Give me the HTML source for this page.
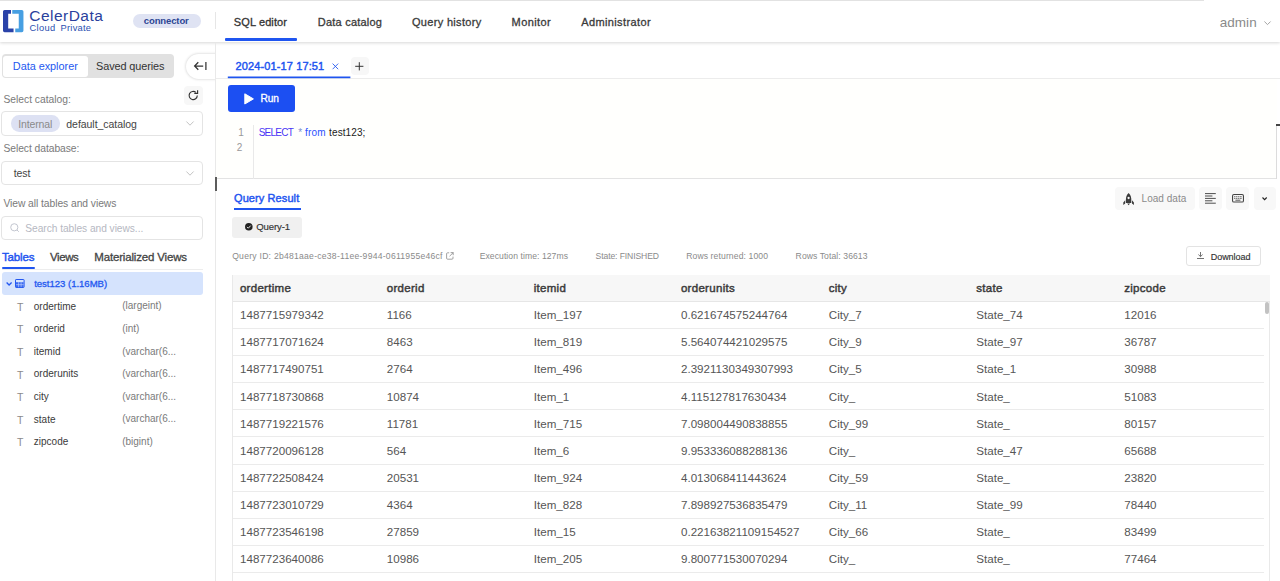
<!DOCTYPE html>
<html lang="en">
<head>
<meta charset="utf-8">
<title>CelerData Cloud Private - SQL editor</title>
<style>
*{box-sizing:border-box;margin:0;padding:0}
html,body{width:1280px;height:581px;overflow:hidden;background:#fff}
body{font-family:"Liberation Sans",sans-serif;position:relative;color:#333}
.t{position:absolute;white-space:nowrap;line-height:16px;height:16px}
.abs{position:absolute}
#topline{left:0;top:0;width:1204px;height:1px;background:#e2e2e2}
#header{left:0;top:0;width:1280px;height:42px;background:#fff;box-shadow:0 1px 3px rgba(0,0,0,.16)}
#hdiv{left:215px;top:12px;width:1px;height:17px;background:#e6e6e6}
#pill{left:133px;top:14px;width:67.5px;height:14px;border-radius:7px;background:#dfe3f3}
#navline{left:225px;top:38px;width:72px;height:3px;background:#1f55f0;border-radius:1px}
#sideborder,#sideborder2{left:215px;top:43px;width:1px;height:538px;background:#e9e9e9}
#seg{left:2px;top:54px;width:172px;height:24px;border-radius:4px;background:#e1e1e1}
#segsel{left:3px;top:55.5px;width:85px;height:21.5px;border-radius:3px;background:#fff}
#collapse{left:186px;top:53.5px;width:34px;height:25.5px;border-radius:13px 0 0 13px;background:#fff;box-shadow:0 0 3px rgba(0,0,0,.22)}
#colmask{left:216px;top:48px;width:10px;height:36px;background:#fff}
#refresh{left:184px;top:86px;width:18.5px;height:19px;border-radius:4px;background:#f7f7f7}
.sel{left:1px;width:202px;height:24.5px;border:1px solid #e4e4e4;border-radius:4px;background:#fff}
#intpill{left:11px;top:115.3px;width:49.3px;height:16.4px;border-radius:8.2px;background:#dde1f3}
#tabline{left:2px;top:269px;width:201px;height:1px;background:#ededed}
#tabink{left:1.8px;top:267px;width:33px;height:2.3px;background:#1f55f0;border-radius:1px}
#treerow{left:1.5px;top:272px;width:201px;height:23px;border-radius:3px;background:#d5e3fd}
#etabline{left:216px;top:78px;width:1064px;height:1px;background:#ececec}
#etabink{left:227.8px;top:76.5px;width:122.6px;height:1.8px;background:#1f55f0}
#plus{left:350.5px;top:57px;width:18px;height:18px;border-radius:4px;background:#f7f7f7}
#run{left:227.8px;top:85px;width:67px;height:26.8px;border-radius:3px;background:#1c4ff2}
#editor{left:216px;top:79px;width:1061px;height:100px;background:#fffffd;border-bottom:1px solid #e3e3e3}
#eright{left:1276px;top:124px;width:1px;height:55px;background:#dcdcdc}
#gutter{left:253px;top:124.6px;width:1px;height:54px;background:#e9e9e9}
#handle{left:215px;top:177px;width:2px;height:13.5px;background:#5c5c5c}
#handle2{left:1276px;top:124px;width:4px;height:2px;background:#444}
#qrink{left:233.8px;top:208px;width:67.2px;height:2.2px;background:#1f55f0}
#chip{left:232px;top:217px;width:70px;height:20.5px;border-radius:3px;background:#f0f0f0}
.tb{top:187px;height:23px;border-radius:4px;background:#f8f8f8}
#dl{left:1186.2px;top:246.3px;width:74.6px;height:19.4px;border:1px solid #e3e3e3;border-radius:3px;background:#fff}
#table{left:232px;top:274.6px;width:1038px;height:310px;border:1px solid #e9e9e9;background:#fff}
#thead{left:233px;top:275px;width:1036.5px;height:27px;background:#f7f7f7;border-bottom:1px solid #e6e6e6}
.rl{left:233px;width:1031px;height:1px;background:#ebebeb}
#sbthumb{left:1265px;top:302px;width:4.2px;height:11.5px;border-radius:2px;background:#c2c2c2}
svg{position:absolute;overflow:visible}
</style>
</head>
<body>
<div class="abs" id="header"></div>
<div class="abs" id="topline"></div>
<div class="abs" id="hdiv"></div>
<div class="abs" id="pill"></div>
<div class="abs" id="navline"></div>
<div class="abs" id="sideborder"></div>

<!-- logo -->
<svg style="left:2.75px;top:9.85px" width="21" height="23" viewBox="0 0 21 23">
  <path d="M1.6 0 H8 V3.7 H5.2 V18.4 H10.55 V22.15 H1.6 Q0 22.15 0 20.55 V1.6 Q0 0 1.6 0 Z" fill="#2a42a8"/>
  <path d="M9.25 0 H18.85 Q20.45 0 20.45 1.6 V20.55 Q20.45 22.15 18.85 22.15 H12.25 V18.6 H15.75 V3.7 H9.25 Z" fill="#479fe2"/>
</svg>

<!-- sidebar -->
<div class="abs" id="seg"></div>
<div class="abs" id="segsel"></div>
<div class="abs" id="collapse"></div>
<div class="abs" id="colmask"></div>
<div class="abs" id="sideborder2"></div>
<svg style="left:193.9px;top:60.6px" width="13" height="10" viewBox="0 0 13 10"><path d="M0.6 5 H9.2 M4.3 1.2 L0.6 5 L4.3 8.8 M11.9 1 V9" fill="none" stroke="#333" stroke-width="1.25"/></svg>
<div class="abs" id="refresh"></div>
<svg style="left:188px;top:90.2px" width="11" height="11" viewBox="0 0 11 11"><path d="M9.3 5.6 A4.1 4.1 0 1 1 7.9 2.4" fill="none" stroke="#333" stroke-width="1.15"/><path d="M6.3 3.4 H9.6 V0.2" fill="none" stroke="#333" stroke-width="1.15"/></svg>
<div class="abs sel" style="top:111px"></div>
<div class="abs" id="intpill"></div>
<svg style="left:186px;top:121px" width="8" height="5" viewBox="0 0 8 5"><path d="M0.4 0.5 L4 4.2 L7.6 0.5" fill="none" stroke="#c4c4c4" stroke-width="1"/></svg>
<div class="abs sel" style="top:161.3px;height:23.4px"></div>
<svg style="left:186px;top:170.8px" width="8" height="5" viewBox="0 0 8 5"><path d="M0.4 0.5 L4 4.2 L7.6 0.5" fill="none" stroke="#c4c4c4" stroke-width="1"/></svg>
<div class="abs sel" style="top:216px;height:24px"></div>
<svg style="left:10.3px;top:222.5px" width="10" height="10" viewBox="0 0 10 10"><circle cx="4.3" cy="4.3" r="3.6" fill="none" stroke="#c3c6d0" stroke-width="1"/><path d="M7 7 L8.8 8.8" stroke="#c3c6d0" stroke-width="1"/></svg>
<div class="abs" id="tabline"></div>
<div class="abs" id="tabink"></div>
<div class="abs" id="treerow"></div>
<svg style="left:5.8px;top:282px" width="7" height="4" viewBox="0 0 7 4"><path d="M0.6 0.5 L3.1 3 L5.6 0.5" fill="none" stroke="#2458f0" stroke-width="1.3"/></svg>
<svg style="left:14.9px;top:279.2px" width="10" height="9" viewBox="0 0 10 9"><rect x="0.5" y="0.5" width="8.6" height="8" rx="0.6" fill="none" stroke="#2458f0" stroke-width="1"/><rect x="1" y="3.2" width="7.6" height="5" fill="#3a69f2"/><path d="M1 5.7 H8.6 M3.6 3.2 V8.2 M6.1 3.2 V8.2" stroke="#cfdcfc" stroke-width="0.6" fill="none"/></svg>

<!-- main -->
<div class="abs" id="editor"></div>
<div class="abs" id="eright"></div>
<div class="abs" id="etabline"></div>
<svg style="left:0;top:0" width="1280" height="581"><rect x="227.8" y="76.5" width="122.6" height="1.7" fill="#1f55f0"/></svg>
<svg style="left:331.5px;top:63.4px" width="7" height="7" viewBox="0 0 7 7"><path d="M0.6 0.6 L6.2 6.2 M6.2 0.6 L0.6 6.2" stroke="#2458f0" stroke-width="0.9" fill="none"/></svg>
<div class="abs" id="plus"></div>
<svg style="left:355.2px;top:61.8px" width="9" height="9" viewBox="0 0 9 9"><path d="M4.3 0.2 V8.4 M0.2 4.3 H8.4" stroke="#333" stroke-width="1" fill="none"/></svg>
<div class="abs" id="run"></div>
<svg style="left:243.7px;top:92.6px" width="10" height="12" viewBox="0 0 10 12"><path d="M0.8 0.8 L9.4 5.9 L0.8 11 Z" fill="#fff" stroke="#fff" stroke-width="1" stroke-linejoin="round"/></svg>
<div class="abs" id="gutter"></div>
<div class="abs" id="handle"></div>
<div class="abs" id="handle2"></div>
<div class="abs" id="qrink"></div>
<div class="abs" id="chip"></div>
<svg style="left:245px;top:223.4px" width="8" height="8" viewBox="0 0 8 8"><circle cx="3.8" cy="3.8" r="3.8" fill="#222"/><path d="M2 3.9 L3.3 5.2 L5.7 2.6" fill="none" stroke="#fff" stroke-width="0.9"/></svg>
<svg style="left:445.8px;top:251.8px" width="8" height="8" viewBox="0 0 8 8"><path d="M3.2 0.8 H1.6 Q0.6 0.8 0.6 1.8 V6.2 Q0.6 7.2 1.6 7.2 H6 Q7 7.2 7 6.2 V4.6 M4.6 0.6 H7.2 V3.2 M7.2 0.6 L3.6 4.2" fill="none" stroke="#8a8a8a" stroke-width="0.8"/></svg>

<!-- toolbar -->
<div class="abs tb" style="left:1114.8px;width:79.8px"></div>
<div class="abs tb" style="left:1199.4px;width:22.4px"></div>
<div class="abs tb" style="left:1226.4px;width:22.5px"></div>
<div class="abs tb" style="left:1253.7px;width:22.4px"></div>
<svg style="left:1123px;top:192.8px" width="12" height="13" viewBox="0 0 12 13"><path d="M5.6 0 C7.6 1.7 8.3 4.2 8.3 6.8 V10 H2.9 V6.8 C2.9 4.2 3.6 1.7 5.6 0 Z" fill="#3a3a3a"/><circle cx="5.6" cy="5" r="1.15" fill="#f8f8f8"/><path d="M2.2 7.2 L0.3 9.4 V12 L2.2 10.6 Z M9 7.2 L10.9 9.4 V12 L9 10.6 Z" fill="#3a3a3a"/><path d="M4.2 10.6 H7 L5.6 12.2 Z" fill="#3a3a3a"/></svg>
<svg style="left:1205px;top:193px" width="11" height="11" viewBox="0 0 11 11"><path d="M0 0.6 H10.8 M0 3 H7.4 M0 5.4 H10.8 M0 7.8 H7.4 M0 10.2 H10.8" stroke="#444" stroke-width="0.95" fill="none"/></svg>
<svg style="left:1232px;top:194.2px" width="12" height="9" viewBox="0 0 12 9"><rect x="0.55" y="0.55" width="10.9" height="7.5" rx="1.4" fill="none" stroke="#444" stroke-width="1.1"/><path d="M2.2 2.7 H3.4 M4.2 2.7 H5.4 M6.2 2.7 H7.4 M8.2 2.7 H9.6 M2.2 4.4 H3.4 M4.2 4.4 H5.4 M6.2 4.4 H7.4 M8.2 4.4 H9.6 M3.4 6.2 H8.4" stroke="#444" stroke-width="0.9" fill="none"/></svg>
<svg style="left:1262.4px;top:197px" width="6" height="4" viewBox="0 0 6 4"><path d="M0.5 0.5 L2.6 2.7 L4.7 0.5" fill="none" stroke="#222" stroke-width="1.1"/></svg>

<div class="abs" id="dl"></div>
<svg style="left:1197.1px;top:252.2px" width="7" height="7" viewBox="0 0 7 7"><path d="M3.5 0 V4.4 M1.4 2.6 L3.5 4.6 L5.6 2.6 M0 6.5 H7" fill="none" stroke="#444" stroke-width="0.75"/></svg>

<!-- table -->
<div class="abs" id="table"></div>
<div class="abs" id="thead"></div>
<div class="abs rl" style="top:327.8px"></div>
<div class="abs rl" style="top:355.0px"></div>
<div class="abs rl" style="top:382.1px"></div>
<div class="abs rl" style="top:409.2px"></div>
<div class="abs rl" style="top:436.4px"></div>
<div class="abs rl" style="top:463.5px"></div>
<div class="abs rl" style="top:490.6px"></div>
<div class="abs rl" style="top:517.7px"></div>
<div class="abs rl" style="top:544.9px"></div>
<div class="abs rl" style="top:572.0px"></div>
<div class="abs" id="sbthumb"></div>
<svg style="left:1263.8px;top:20.8px" width="8" height="5" viewBox="0 0 8 5"><path d="M0.4 0.5 L3.5 3.6 L6.6 0.5" fill="none" stroke="#9a9a9a" stroke-width="0.9"/></svg>

<span class="t" id="t0" style="left:29.3px;top:8.2px;font-size:15.5px;color:#2a3f9d;letter-spacing:0.465px;">CelerData</span>
<span class="t" id="t1" style="left:29.6px;top:19.6px;font-size:9.3px;color:#2a4fb0;letter-spacing:0.301px;">Cloud</span>
<span class="t" id="t2" style="left:60.5px;top:19.6px;font-size:9.3px;color:#2a4fb0;letter-spacing:0.260px;">Private</span>
<span class="t" id="t3" style="left:143.8px;top:12.6px;font-size:9.5px;color:#2c4593;font-weight:700;letter-spacing:-0.117px;">connector</span>
<span class="t" id="t4" style="left:233.8px;top:13.9px;font-size:11px;color:#333;-webkit-text-stroke:0.3px #333;letter-spacing:0.113px;">SQL editor</span>
<span class="t" id="t5" style="left:317.8px;top:13.9px;font-size:11px;color:#3a3a3a;-webkit-text-stroke:0.3px #3a3a3a;letter-spacing:0.221px;">Data catalog</span>
<span class="t" id="t6" style="left:411.9px;top:13.9px;font-size:11px;color:#3a3a3a;-webkit-text-stroke:0.3px #3a3a3a;letter-spacing:0.332px;">Query history</span>
<span class="t" id="t7" style="left:511.6px;top:13.9px;font-size:11px;color:#3a3a3a;-webkit-text-stroke:0.3px #3a3a3a;letter-spacing:0.385px;">Monitor</span>
<span class="t" id="t8" style="left:581.2px;top:13.9px;font-size:11px;color:#3a3a3a;-webkit-text-stroke:0.3px #3a3a3a;letter-spacing:0.384px;">Administrator</span>
<span class="t" id="t9" style="left:1219.7px;top:15.3px;font-size:13.5px;color:#8a8a8a;letter-spacing:0.055px;">admin</span>
<span class="t" id="t10" style="left:12.8px;top:58.3px;font-size:10.9px;color:#2458f0;letter-spacing:-0.033px;">Data explorer</span>
<span class="t" id="t11" style="left:96.0px;top:58.3px;font-size:10.9px;color:#333;letter-spacing:-0.094px;">Saved queries</span>
<span class="t" id="t12" style="left:3.4px;top:91.6px;font-size:10.3px;color:#7a7a7a;letter-spacing:-0.003px;">Select catalog:</span>
<span class="t" id="t13" style="left:18.2px;top:115.8px;font-size:10.5px;color:#8a8a8a;letter-spacing:-0.119px;">Internal</span>
<span class="t" id="t14" style="left:66.3px;top:115.8px;font-size:10.5px;color:#444;letter-spacing:-0.045px;">default_catalog</span>
<span class="t" id="t15" style="left:3.4px;top:141.2px;font-size:10.3px;color:#7a7a7a;letter-spacing:-0.048px;">Select database:</span>
<span class="t" id="t16" style="left:13.8px;top:165.4px;font-size:10.5px;color:#444;letter-spacing:-0.112px;">test</span>
<span class="t" id="t17" style="left:3.4px;top:195.5px;font-size:10.3px;color:#7a7a7a;letter-spacing:-0.054px;">View all tables and views</span>
<span class="t" id="t18" style="left:25.3px;top:221.2px;font-size:10.2px;color:#b6b8c2;letter-spacing:-0.037px;">Search tables and views...</span>
<span class="t" id="t19" style="left:1.9px;top:249.4px;font-size:11.5px;color:#1f55f0;-webkit-text-stroke:0.45px #1f55f0;letter-spacing:-0.130px;">Tables</span>
<span class="t" id="t20" style="left:50.0px;top:249.4px;font-size:11.5px;color:#444;-webkit-text-stroke:0.3px #444;letter-spacing:-0.417px;">Views</span>
<span class="t" id="t21" style="left:94.3px;top:249.4px;font-size:11.5px;color:#444;-webkit-text-stroke:0.3px #444;letter-spacing:-0.169px;">Materialized Views</span>
<span class="t" id="t22" style="left:34.2px;top:275.7px;font-size:9.6px;color:#2458f0;-webkit-text-stroke:0.3px #2458f0;letter-spacing:-0.040px;">test123 (1.16MB)</span>
<span class="t" id="t23" style="left:17.1px;top:298.8px;font-size:10.5px;color:#8a8a8a;">T</span>
<span class="t" id="t24" style="left:33.8px;top:298.6px;font-size:10px;color:#3a3a3a;">ordertime</span>
<span class="t" id="t25" style="left:122.2px;top:298.3px;font-size:10px;color:#7a7a7a;">(largeint)</span>
<span class="t" id="t26" style="left:17.1px;top:321.4px;font-size:10.5px;color:#8a8a8a;">T</span>
<span class="t" id="t27" style="left:33.8px;top:321.2px;font-size:10px;color:#3a3a3a;">orderid</span>
<span class="t" id="t28" style="left:122.2px;top:320.9px;font-size:10px;color:#7a7a7a;">(int)</span>
<span class="t" id="t29" style="left:17.1px;top:344.0px;font-size:10.5px;color:#8a8a8a;">T</span>
<span class="t" id="t30" style="left:33.8px;top:343.8px;font-size:10px;color:#3a3a3a;">itemid</span>
<span class="t" id="t31" style="left:122.2px;top:343.5px;font-size:10px;color:#7a7a7a;">(varchar(6...</span>
<span class="t" id="t32" style="left:17.1px;top:366.6px;font-size:10.5px;color:#8a8a8a;">T</span>
<span class="t" id="t33" style="left:33.8px;top:366.4px;font-size:10px;color:#3a3a3a;">orderunits</span>
<span class="t" id="t34" style="left:122.2px;top:366.1px;font-size:10px;color:#7a7a7a;">(varchar(6...</span>
<span class="t" id="t35" style="left:17.1px;top:389.2px;font-size:10.5px;color:#8a8a8a;">T</span>
<span class="t" id="t36" style="left:33.8px;top:389.0px;font-size:10px;color:#3a3a3a;">city</span>
<span class="t" id="t37" style="left:122.2px;top:388.7px;font-size:10px;color:#7a7a7a;">(varchar(6...</span>
<span class="t" id="t38" style="left:17.1px;top:411.8px;font-size:10.5px;color:#8a8a8a;">T</span>
<span class="t" id="t39" style="left:33.8px;top:411.6px;font-size:10px;color:#3a3a3a;">state</span>
<span class="t" id="t40" style="left:122.2px;top:411.3px;font-size:10px;color:#7a7a7a;">(varchar(6...</span>
<span class="t" id="t41" style="left:17.1px;top:434.4px;font-size:10.5px;color:#8a8a8a;">T</span>
<span class="t" id="t42" style="left:33.8px;top:434.2px;font-size:10px;color:#3a3a3a;">zipcode</span>
<span class="t" id="t43" style="left:122.2px;top:433.9px;font-size:10px;color:#7a7a7a;">(bigint)</span>
<span class="t" id="t44" style="left:235.6px;top:57.9px;font-size:11px;color:#1f55f0;-webkit-text-stroke:0.45px #1f55f0;letter-spacing:0.116px;">2024-01-17 17:51</span>
<span class="t" id="t45" style="left:260.4px;top:90.8px;font-size:10.2px;color:#fff;-webkit-text-stroke:0.3px #fff;letter-spacing:-0.052px;">Run</span>
<span class="t" id="t46" style="left:238.2px;top:124.6px;font-size:10px;color:#999;">1</span>
<span class="t" id="t47" style="left:236.7px;top:139.5px;font-size:10px;color:#999;">2</span>
<span class="t" id="t48" style="left:258.7px;top:125.1px;font-size:10px;color:#4a35f5;letter-spacing:-0.761px;">SELECT</span>
<span class="t" id="t49" style="left:298.2px;top:125.1px;font-size:10px;color:#7b8fd0;">*</span>
<span class="t" id="t50" style="left:305.0px;top:125.1px;font-size:10px;color:#2a50ff;letter-spacing:0.233px;">from</span>
<span class="t" id="t51" style="left:329.1px;top:125.1px;font-size:10px;color:#222;letter-spacing:0.101px;">test123;</span>
<span class="t" id="t52" style="left:234.0px;top:189.8px;font-size:11px;color:#1f55f0;-webkit-text-stroke:0.45px #1f55f0;letter-spacing:0.091px;">Query Result</span>
<span class="t" id="t53" style="left:256.3px;top:219.2px;font-size:9.6px;color:#333;-webkit-text-stroke:0.15px #333;letter-spacing:-0.143px;">Query-1</span>
<span class="t" id="t54" style="left:232.2px;top:248.0px;font-size:8.6px;color:#8a8a8a;letter-spacing:0.253px;">Query ID: 2b481aae-ce38-11ee-9944-0611955e46cf</span>
<span class="t" id="t55" style="left:479.7px;top:248.0px;font-size:8.6px;color:#8a8a8a;letter-spacing:0.068px;">Execution time: 127ms</span>
<span class="t" id="t56" style="left:595.6px;top:248.0px;font-size:8.6px;color:#8a8a8a;letter-spacing:-0.111px;">State: FINISHED</span>
<span class="t" id="t57" style="left:686.2px;top:248.0px;font-size:8.6px;color:#8a8a8a;letter-spacing:0.112px;">Rows returned: 1000</span>
<span class="t" id="t58" style="left:795.6px;top:248.0px;font-size:8.6px;color:#8a8a8a;letter-spacing:0.085px;">Rows Total: 36613</span>
<span class="t" id="t59" style="left:1141.6px;top:191.4px;font-size:10px;color:#8a8a8a;letter-spacing:0.025px;">Load data</span>
<span class="t" id="t60" style="left:1210.7px;top:248.7px;font-size:9px;color:#333;-webkit-text-stroke:0.15px #333;letter-spacing:-0.033px;">Download</span>
<span class="t" id="t61" style="left:239.9px;top:280.4px;font-size:11.5px;color:#3a3a3a;-webkit-text-stroke:0.45px #3a3a3a;letter-spacing:0.3px;">ordertime</span>
<span class="t" id="t62" style="left:386.7px;top:280.4px;font-size:11.5px;color:#3a3a3a;-webkit-text-stroke:0.45px #3a3a3a;letter-spacing:0.3px;">orderid</span>
<span class="t" id="t63" style="left:533.7px;top:280.4px;font-size:11.5px;color:#3a3a3a;-webkit-text-stroke:0.45px #3a3a3a;letter-spacing:0.3px;">itemid</span>
<span class="t" id="t64" style="left:680.9px;top:280.4px;font-size:11.5px;color:#3a3a3a;-webkit-text-stroke:0.45px #3a3a3a;letter-spacing:0.3px;">orderunits</span>
<span class="t" id="t65" style="left:828.7px;top:280.4px;font-size:11.5px;color:#3a3a3a;-webkit-text-stroke:0.45px #3a3a3a;letter-spacing:0.3px;">city</span>
<span class="t" id="t66" style="left:976.2px;top:280.4px;font-size:11.5px;color:#3a3a3a;-webkit-text-stroke:0.45px #3a3a3a;letter-spacing:0.3px;">state</span>
<span class="t" id="t67" style="left:1124.2px;top:280.4px;font-size:11.5px;color:#3a3a3a;-webkit-text-stroke:0.45px #3a3a3a;letter-spacing:0.3px;">zipcode</span>
<span class="t" id="t68" style="left:240.0px;top:307.1px;font-size:11.6px;color:#555;">1487715979342</span>
<span class="t" id="t69" style="left:386.8px;top:307.1px;font-size:11.6px;color:#555;">1166</span>
<span class="t" id="t70" style="left:533.8px;top:307.1px;font-size:11.6px;color:#555;">Item_197</span>
<span class="t" id="t71" style="left:681.0px;top:307.1px;font-size:11.6px;color:#555;">0.621674575244764</span>
<span class="t" id="t72" style="left:828.8px;top:307.1px;font-size:11.6px;color:#555;">City_7</span>
<span class="t" id="t73" style="left:976.3px;top:307.1px;font-size:11.6px;color:#555;">State_74</span>
<span class="t" id="t74" style="left:1124.3px;top:307.1px;font-size:11.6px;color:#555;">12016</span>
<span class="t" id="t75" style="left:240.0px;top:334.2px;font-size:11.6px;color:#555;">1487717071624</span>
<span class="t" id="t76" style="left:386.8px;top:334.2px;font-size:11.6px;color:#555;">8463</span>
<span class="t" id="t77" style="left:533.8px;top:334.2px;font-size:11.6px;color:#555;">Item_819</span>
<span class="t" id="t78" style="left:681.0px;top:334.2px;font-size:11.6px;color:#555;">5.564074421029575</span>
<span class="t" id="t79" style="left:828.8px;top:334.2px;font-size:11.6px;color:#555;">City_9</span>
<span class="t" id="t80" style="left:976.3px;top:334.2px;font-size:11.6px;color:#555;">State_97</span>
<span class="t" id="t81" style="left:1124.3px;top:334.2px;font-size:11.6px;color:#555;">36787</span>
<span class="t" id="t82" style="left:240.0px;top:361.4px;font-size:11.6px;color:#555;">1487717490751</span>
<span class="t" id="t83" style="left:386.8px;top:361.4px;font-size:11.6px;color:#555;">2764</span>
<span class="t" id="t84" style="left:533.8px;top:361.4px;font-size:11.6px;color:#555;">Item_496</span>
<span class="t" id="t85" style="left:681.0px;top:361.4px;font-size:11.6px;color:#555;">2.3921130349307993</span>
<span class="t" id="t86" style="left:828.8px;top:361.4px;font-size:11.6px;color:#555;">City_5</span>
<span class="t" id="t87" style="left:976.3px;top:361.4px;font-size:11.6px;color:#555;">State_1</span>
<span class="t" id="t88" style="left:1124.3px;top:361.4px;font-size:11.6px;color:#555;">30988</span>
<span class="t" id="t89" style="left:240.0px;top:388.5px;font-size:11.6px;color:#555;">1487718730868</span>
<span class="t" id="t90" style="left:386.8px;top:388.5px;font-size:11.6px;color:#555;">10874</span>
<span class="t" id="t91" style="left:533.8px;top:388.5px;font-size:11.6px;color:#555;">Item_1</span>
<span class="t" id="t92" style="left:681.0px;top:388.5px;font-size:11.6px;color:#555;">4.115127817630434</span>
<span class="t" id="t93" style="left:828.8px;top:388.5px;font-size:11.6px;color:#555;">City_</span>
<span class="t" id="t94" style="left:976.3px;top:388.5px;font-size:11.6px;color:#555;">State_</span>
<span class="t" id="t95" style="left:1124.3px;top:388.5px;font-size:11.6px;color:#555;">51083</span>
<span class="t" id="t96" style="left:240.0px;top:415.6px;font-size:11.6px;color:#555;">1487719221576</span>
<span class="t" id="t97" style="left:386.8px;top:415.6px;font-size:11.6px;color:#555;">11781</span>
<span class="t" id="t98" style="left:533.8px;top:415.6px;font-size:11.6px;color:#555;">Item_715</span>
<span class="t" id="t99" style="left:681.0px;top:415.6px;font-size:11.6px;color:#555;">7.098004490838855</span>
<span class="t" id="t100" style="left:828.8px;top:415.6px;font-size:11.6px;color:#555;">City_99</span>
<span class="t" id="t101" style="left:976.3px;top:415.6px;font-size:11.6px;color:#555;">State_</span>
<span class="t" id="t102" style="left:1124.3px;top:415.6px;font-size:11.6px;color:#555;">80157</span>
<span class="t" id="t103" style="left:240.0px;top:442.8px;font-size:11.6px;color:#555;">1487720096128</span>
<span class="t" id="t104" style="left:386.8px;top:442.8px;font-size:11.6px;color:#555;">564</span>
<span class="t" id="t105" style="left:533.8px;top:442.8px;font-size:11.6px;color:#555;">Item_6</span>
<span class="t" id="t106" style="left:681.0px;top:442.8px;font-size:11.6px;color:#555;">9.953336088288136</span>
<span class="t" id="t107" style="left:828.8px;top:442.8px;font-size:11.6px;color:#555;">City_</span>
<span class="t" id="t108" style="left:976.3px;top:442.8px;font-size:11.6px;color:#555;">State_47</span>
<span class="t" id="t109" style="left:1124.3px;top:442.8px;font-size:11.6px;color:#555;">65688</span>
<span class="t" id="t110" style="left:240.0px;top:469.9px;font-size:11.6px;color:#555;">1487722508424</span>
<span class="t" id="t111" style="left:386.8px;top:469.9px;font-size:11.6px;color:#555;">20531</span>
<span class="t" id="t112" style="left:533.8px;top:469.9px;font-size:11.6px;color:#555;">Item_924</span>
<span class="t" id="t113" style="left:681.0px;top:469.9px;font-size:11.6px;color:#555;">4.013068411443624</span>
<span class="t" id="t114" style="left:828.8px;top:469.9px;font-size:11.6px;color:#555;">City_59</span>
<span class="t" id="t115" style="left:976.3px;top:469.9px;font-size:11.6px;color:#555;">State_</span>
<span class="t" id="t116" style="left:1124.3px;top:469.9px;font-size:11.6px;color:#555;">23820</span>
<span class="t" id="t117" style="left:240.0px;top:497.0px;font-size:11.6px;color:#555;">1487723010729</span>
<span class="t" id="t118" style="left:386.8px;top:497.0px;font-size:11.6px;color:#555;">4364</span>
<span class="t" id="t119" style="left:533.8px;top:497.0px;font-size:11.6px;color:#555;">Item_828</span>
<span class="t" id="t120" style="left:681.0px;top:497.0px;font-size:11.6px;color:#555;">7.898927536835479</span>
<span class="t" id="t121" style="left:828.8px;top:497.0px;font-size:11.6px;color:#555;">City_11</span>
<span class="t" id="t122" style="left:976.3px;top:497.0px;font-size:11.6px;color:#555;">State_99</span>
<span class="t" id="t123" style="left:1124.3px;top:497.0px;font-size:11.6px;color:#555;">78440</span>
<span class="t" id="t124" style="left:240.0px;top:524.1px;font-size:11.6px;color:#555;">1487723546198</span>
<span class="t" id="t125" style="left:386.8px;top:524.1px;font-size:11.6px;color:#555;">27859</span>
<span class="t" id="t126" style="left:533.8px;top:524.1px;font-size:11.6px;color:#555;">Item_15</span>
<span class="t" id="t127" style="left:681.0px;top:524.1px;font-size:11.6px;color:#555;">0.22163821109154527</span>
<span class="t" id="t128" style="left:828.8px;top:524.1px;font-size:11.6px;color:#555;">City_66</span>
<span class="t" id="t129" style="left:976.3px;top:524.1px;font-size:11.6px;color:#555;">State_</span>
<span class="t" id="t130" style="left:1124.3px;top:524.1px;font-size:11.6px;color:#555;">83499</span>
<span class="t" id="t131" style="left:240.0px;top:551.3px;font-size:11.6px;color:#555;">1487723640086</span>
<span class="t" id="t132" style="left:386.8px;top:551.3px;font-size:11.6px;color:#555;">10986</span>
<span class="t" id="t133" style="left:533.8px;top:551.3px;font-size:11.6px;color:#555;">Item_205</span>
<span class="t" id="t134" style="left:681.0px;top:551.3px;font-size:11.6px;color:#555;">9.800771530070294</span>
<span class="t" id="t135" style="left:828.8px;top:551.3px;font-size:11.6px;color:#555;">City_</span>
<span class="t" id="t136" style="left:976.3px;top:551.3px;font-size:11.6px;color:#555;">State_</span>
<span class="t" id="t137" style="left:1124.3px;top:551.3px;font-size:11.6px;color:#555;">77464</span>
</body>
</html>
